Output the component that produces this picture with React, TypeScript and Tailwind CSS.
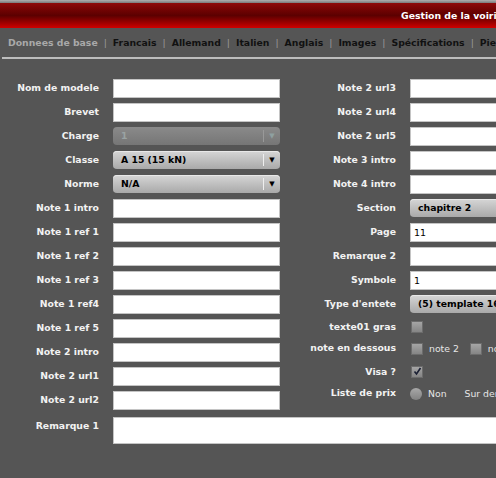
import React from "react";

const font = { fontFamily: '"DejaVu Sans", Verdana, sans-serif' };

const tabs = [
  "Francais",
  "Allemand",
  "Italien",
  "Anglais",
  "Images",
  "Spécifications",
  "Pieces",
];

type Row =
  | { label: string; kind: "text"; value?: string }
  | { label: string; kind: "select"; value: string; disabled?: boolean };

const leftRows: Row[] = [
  { label: "Nom de modele", kind: "text" },
  { label: "Brevet", kind: "text" },
  { label: "Charge", kind: "select", value: "1", disabled: true },
  { label: "Classe", kind: "select", value: "A 15 (15 kN)" },
  { label: "Norme", kind: "select", value: "N/A" },
  { label: "Note 1 intro", kind: "text" },
  { label: "Note 1 ref 1", kind: "text" },
  { label: "Note 1 ref 2", kind: "text" },
  { label: "Note 1 ref 3", kind: "text" },
  { label: "Note 1 ref4", kind: "text" },
  { label: "Note 1 ref 5", kind: "text" },
  { label: "Note 2 intro", kind: "text" },
  { label: "Note 2 url1", kind: "text" },
  { label: "Note 2 url2", kind: "text" },
];

const rightRows: Row[] = [
  { label: "Note 2 url3", kind: "text" },
  { label: "Note 2 url4", kind: "text" },
  { label: "Note 2 url5", kind: "text" },
  { label: "Note 3 intro", kind: "text" },
  { label: "Note 4 intro", kind: "text" },
  { label: "Section", kind: "select", value: "chapitre 2" },
  { label: "Page", kind: "text", value: "11" },
  { label: "Remarque 2", kind: "text" },
  { label: "Symbole", kind: "text", value: "1" },
  { label: "Type d'entete", kind: "select", value: "(5) template 16" },
];

function TextBox({ value, wide }: { value?: string; wide?: boolean }) {
  return (
    <div
      className={`h-[19px] border border-[#c4c4c4] bg-white px-[3px] text-[9.5px] font-normal leading-[17px] text-black ${
        wide ? "w-[300px]" : "w-[167px]"
      }`}
    >
      {value}
    </div>
  );
}

function Select({
  value,
  disabled,
  wide,
}: {
  value: string;
  disabled?: boolean;
  wide?: boolean;
}) {
  return (
    <div
      className={`flex h-[18px] items-center rounded-[4px] pl-[8px] font-bold ${
        wide ? "w-[300px]" : "w-[167px]"
      } ${
        disabled
          ? "bg-gradient-to-b from-[#8a8a8a] to-[#767676] text-[#9aa3a3]"
          : "bg-gradient-to-b from-[#d6d6d6] to-[#a9a9a9] text-black shadow-[inset_0_1px_0_#e8e8e8]"
      }`}
    >
      <span className="flex-1 whitespace-nowrap">{value}</span>
      {!wide && (
        <>
          <span
            className={`h-[12px] w-px ${disabled ? "bg-[#999]" : "bg-[#eee]"}`}
          />
          <span
            className={`flex w-[16px] justify-center text-[7px] ${
              disabled ? "text-[#8fa0a0]" : "text-black"
            }`}
          >
            ▼
          </span>
        </>
      )}
    </div>
  );
}

function Field({ row, wide }: { row: Row; wide?: boolean }) {
  if (row.kind === "select")
    return <Select value={row.value} disabled={row.disabled} wide={wide} />;
  return <TextBox value={row.value} wide={wide} />;
}

function Check({ checked }: { checked?: boolean }) {
  return (
    <span className="flex h-[12px] w-[12px] items-center justify-center border border-[#6c6c6c] bg-gradient-to-b from-[#a5a5a5] to-[#858585]">
      {checked && (
        <svg width="9" height="9" viewBox="0 0 9 9">
          <path
            d="M1.5 4.5 L3.5 7 L7.5 1"
            fill="none"
            stroke="#1a1f33"
            strokeWidth="1.6"
          />
        </svg>
      )}
    </span>
  );
}

function Radio() {
  return (
    <span className="h-[12px] w-[12px] rounded-full bg-gradient-to-b from-[#a8a8a8] to-[#828282]" />
  );
}

export default function App() {
  return (
    <div
      className="h-[478px] w-full overflow-hidden bg-[#555555] text-[9.3px]"
      style={font}
    >
      <div className="h-[3px] bg-gradient-to-b from-[#b0b0b0] to-[#7a7a7a]" />
      <div className="h-[25px] overflow-hidden bg-gradient-to-b from-[#8e0a0a] via-[#5c0000] to-[#d00000] pl-[401px] font-bold leading-[25px] whitespace-nowrap text-white">
        Gestion de la voirie
      </div>

      <div className="flex h-[29px] items-center overflow-hidden whitespace-nowrap pl-[8px] font-bold">
        <span className="text-[#a9a9a9]">Donnees de base</span>
        {tabs.map((t) => (
          <React.Fragment key={t}>
            <span className="px-[6px] font-normal text-[#9a9a9a]">|</span>
            <span className="text-[#111]">{t}</span>
          </React.Fragment>
        ))}
      </div>
      <div className="ml-[2px] h-[2px] bg-[#bdbdbd]" />

      <div className="flex pt-[17px] font-bold text-[#f2f2f2]">
        <div className="w-[280px] shrink-0">
          {leftRows.map((r) => (
            <div key={r.label} className="flex h-[24px] items-center">
              <span className="w-[99px] shrink-0 whitespace-nowrap text-right">
                {r.label}
              </span>
              <span className="ml-[14px]">
                <Field row={r} />
              </span>
            </div>
          ))}
        </div>
        <div className="shrink-0">
          {rightRows.map((r) => (
            <div key={r.label} className="flex h-[24px] items-center">
              <span className="w-[116px] shrink-0 whitespace-nowrap text-right">
                {r.label}
              </span>
              <span className="ml-[14px]">
                <Field row={r} wide />
              </span>
            </div>
          ))}
          <div className="flex h-[22px] items-center">
            <span className="w-[116px] shrink-0 text-right">texte01 gras</span>
            <span className="ml-[15px]">
              <Check />
            </span>
          </div>
          <div className="flex h-[22px] items-center">
            <span className="-mt-[3px] w-[116px] shrink-0 whitespace-nowrap text-right">
              note en dessous
            </span>
            <span className="ml-[15px] flex items-center whitespace-nowrap font-normal text-[#e6e6e6]">
              <Check />
              <span className="ml-[6px]">note 2</span>
              <span className="ml-[11px]">
                <Check />
              </span>
              <span className="ml-[6px]">note 3</span>
            </span>
          </div>
          <div className="flex h-[23px] items-center">
            <span className="w-[116px] shrink-0 text-right">Visa ?</span>
            <span className="ml-[15px]">
              <Check checked />
            </span>
          </div>
          <div className="flex h-[22px] items-center">
            <span className="-mt-[3px] w-[116px] shrink-0 whitespace-nowrap text-right">
              Liste de prix
            </span>
            <span className="ml-[14px] flex items-center whitespace-nowrap font-normal text-[#e6e6e6]">
              <Radio />
              <span className="ml-[6px]">Non</span>
              <span className="ml-[10px]">
                <Radio />
              </span>
              <span className="ml-[8px]">Sur demande</span>
            </span>
          </div>
        </div>
      </div>

      <div className="mt-[5px] flex font-bold text-[#f2f2f2]">
        <span className="w-[99px] shrink-0 whitespace-nowrap pt-[2px] text-right">
          Remarque 1
        </span>
        <div className="ml-[14px] h-[27px] w-[600px] shrink-0 border border-[#c4c4c4] bg-white" />
      </div>
    </div>
  );
}
